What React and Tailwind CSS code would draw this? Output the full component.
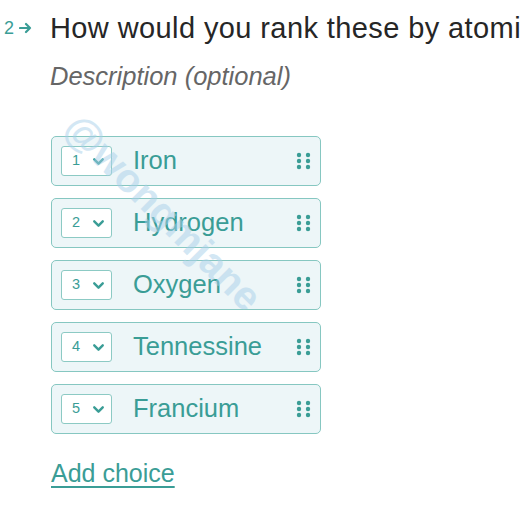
import { ChevronDown } from 'lucide-react';

const choices = ['Iron', 'Hydrogen', 'Oxygen', 'Tennessine', 'Francium'];

const DragDots = () => (
    <svg width="15" height="18" viewBox="0 0 15 18" className="text-[#3a9d96]">
        {[3, 9, 15].map(y => (
            <g key={y}>
                <circle cx="3" cy={y} r="2.2" fill="currentColor" />
                <circle cx="12" cy={y} r="2.2" fill="currentColor" />
            </g>
        ))}
    </svg>
);

const ChoiceRow = ({ index, label }) => (
    <div className="flex items-center h-[50px] w-[270px] rounded-[5px] border border-[#86c7c1] bg-[#edf6f8] pl-[9px] pr-[9px]">
        <div className="flex items-center h-[30px] w-[51px] shrink-0 rounded-[3px] border border-[#8ccac4] bg-white pl-[10px]">
            <span className="text-[14.5px] text-[#3a9d96] w-[18px]">{index}</span>
            <ChevronDown size={17} strokeWidth={3.4} className="text-[#3a9d96]" />
        </div>
        <span className="ml-[21px] text-[25.5px] text-[#3a9d96] leading-none">{label}</span>
        <div className="ml-auto">
            <DragDots />
        </div>
    </div>
);

export default function App() {
    return (
        <div className="relative w-[520px] h-[520px] overflow-hidden bg-white font-['Liberation_Sans',Arial,sans-serif]">
            {/* Question header */}
            <div className="flex items-center pt-[10px] whitespace-nowrap">
                <div className="flex items-center w-[50px] shrink-0 pl-[4px] text-[#3a9d96]">
                    <span className="text-[18px]">2</span>
                    <svg width="14" height="12" viewBox="0 0 14 12" className="ml-[5px]">
                        <path d="M1 6h10M7 2l4 4-4 4" fill="none" stroke="currentColor" strokeWidth="2.2" strokeLinecap="round" strokeLinejoin="round" />
                    </svg>
                </div>
                <span className="text-[29px] tracking-[0.4px] text-[#262626] leading-[36px]">How would you rank these by atomic number?</span>
            </div>
            <div className="pl-[50px] mt-[15px] text-[25.5px] italic text-[#666666] leading-[30px]">Description (optional)</div>

            {/* Choices */}
            <div className="flex flex-col gap-[12px] pl-[51px] mt-[45px]">
                {choices.map((c, i) => (
                    <ChoiceRow key={c} index={i + 1} label={c} />
                ))}
            </div>

            <div className="pl-[51px] mt-[21px]">
                <span className="text-[25px] text-[#3a9d96] underline decoration-2 underline-offset-[4px]">Add choice</span>
            </div>

            {/* watermark */}
            <div className="absolute left-[34px] top-[182px] rotate-[45deg] text-[40px] font-bold text-[#a9d0ea] opacity-50 pointer-events-none whitespace-nowrap">
                @wongmjane
            </div>
        </div>
    );
}
